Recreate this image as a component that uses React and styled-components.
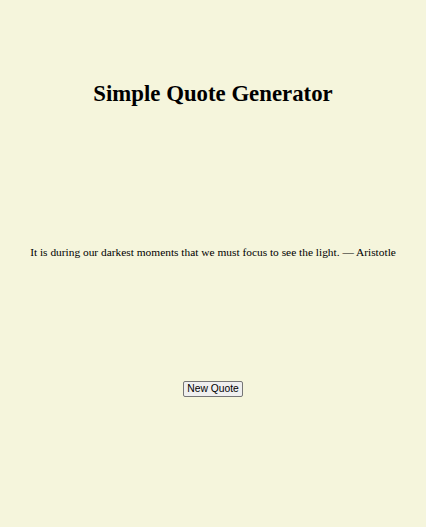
import React from 'react';
import styled, { createGlobalStyle } from 'styled-components';

const GlobalStyle = createGlobalStyle`
    body {
        margin: 0;
        background: #f5f5dc;
        font-family: "Liberation Serif", "Times New Roman", serif;
        color: #000;
    }
`

const Page = styled.div`
    display: flex;
    flex-direction: column;
    align-items: center;
    padding-top: 80px;
`

const Title = styled.h1`
    margin: 0;
    font-size: 22.8px;
    font-weight: bold;
    line-height: 28px;
`

const Quote = styled.p`
    margin: 137px 0 0;
    font-size: 11.4px;
    line-height: 14px;
    text-align: center;
`

const Button = styled.button`
    margin-top: 122px;
    font-family: "Liberation Sans", Arial, sans-serif;
    font-size: 10.3px;
    line-height: 12px;
    padding: 1px 3px;
    background: #efefef;
    border: 1px solid #767676;
    border-radius: 2px;
    color: #000;
`

export default class App extends React.Component {
    state = {
        quote: 'It is during our darkest moments that we must focus to see the light. \u2014 Aristotle'
    }

    render() {
        return (
            <>
                <GlobalStyle />
                <Page>
                    <Title>Simple Quote Generator</Title>
                    <Quote>{this.state.quote}</Quote>
                    <Button type="button">New Quote</Button>
                </Page>
            </>
        )
    }
}
